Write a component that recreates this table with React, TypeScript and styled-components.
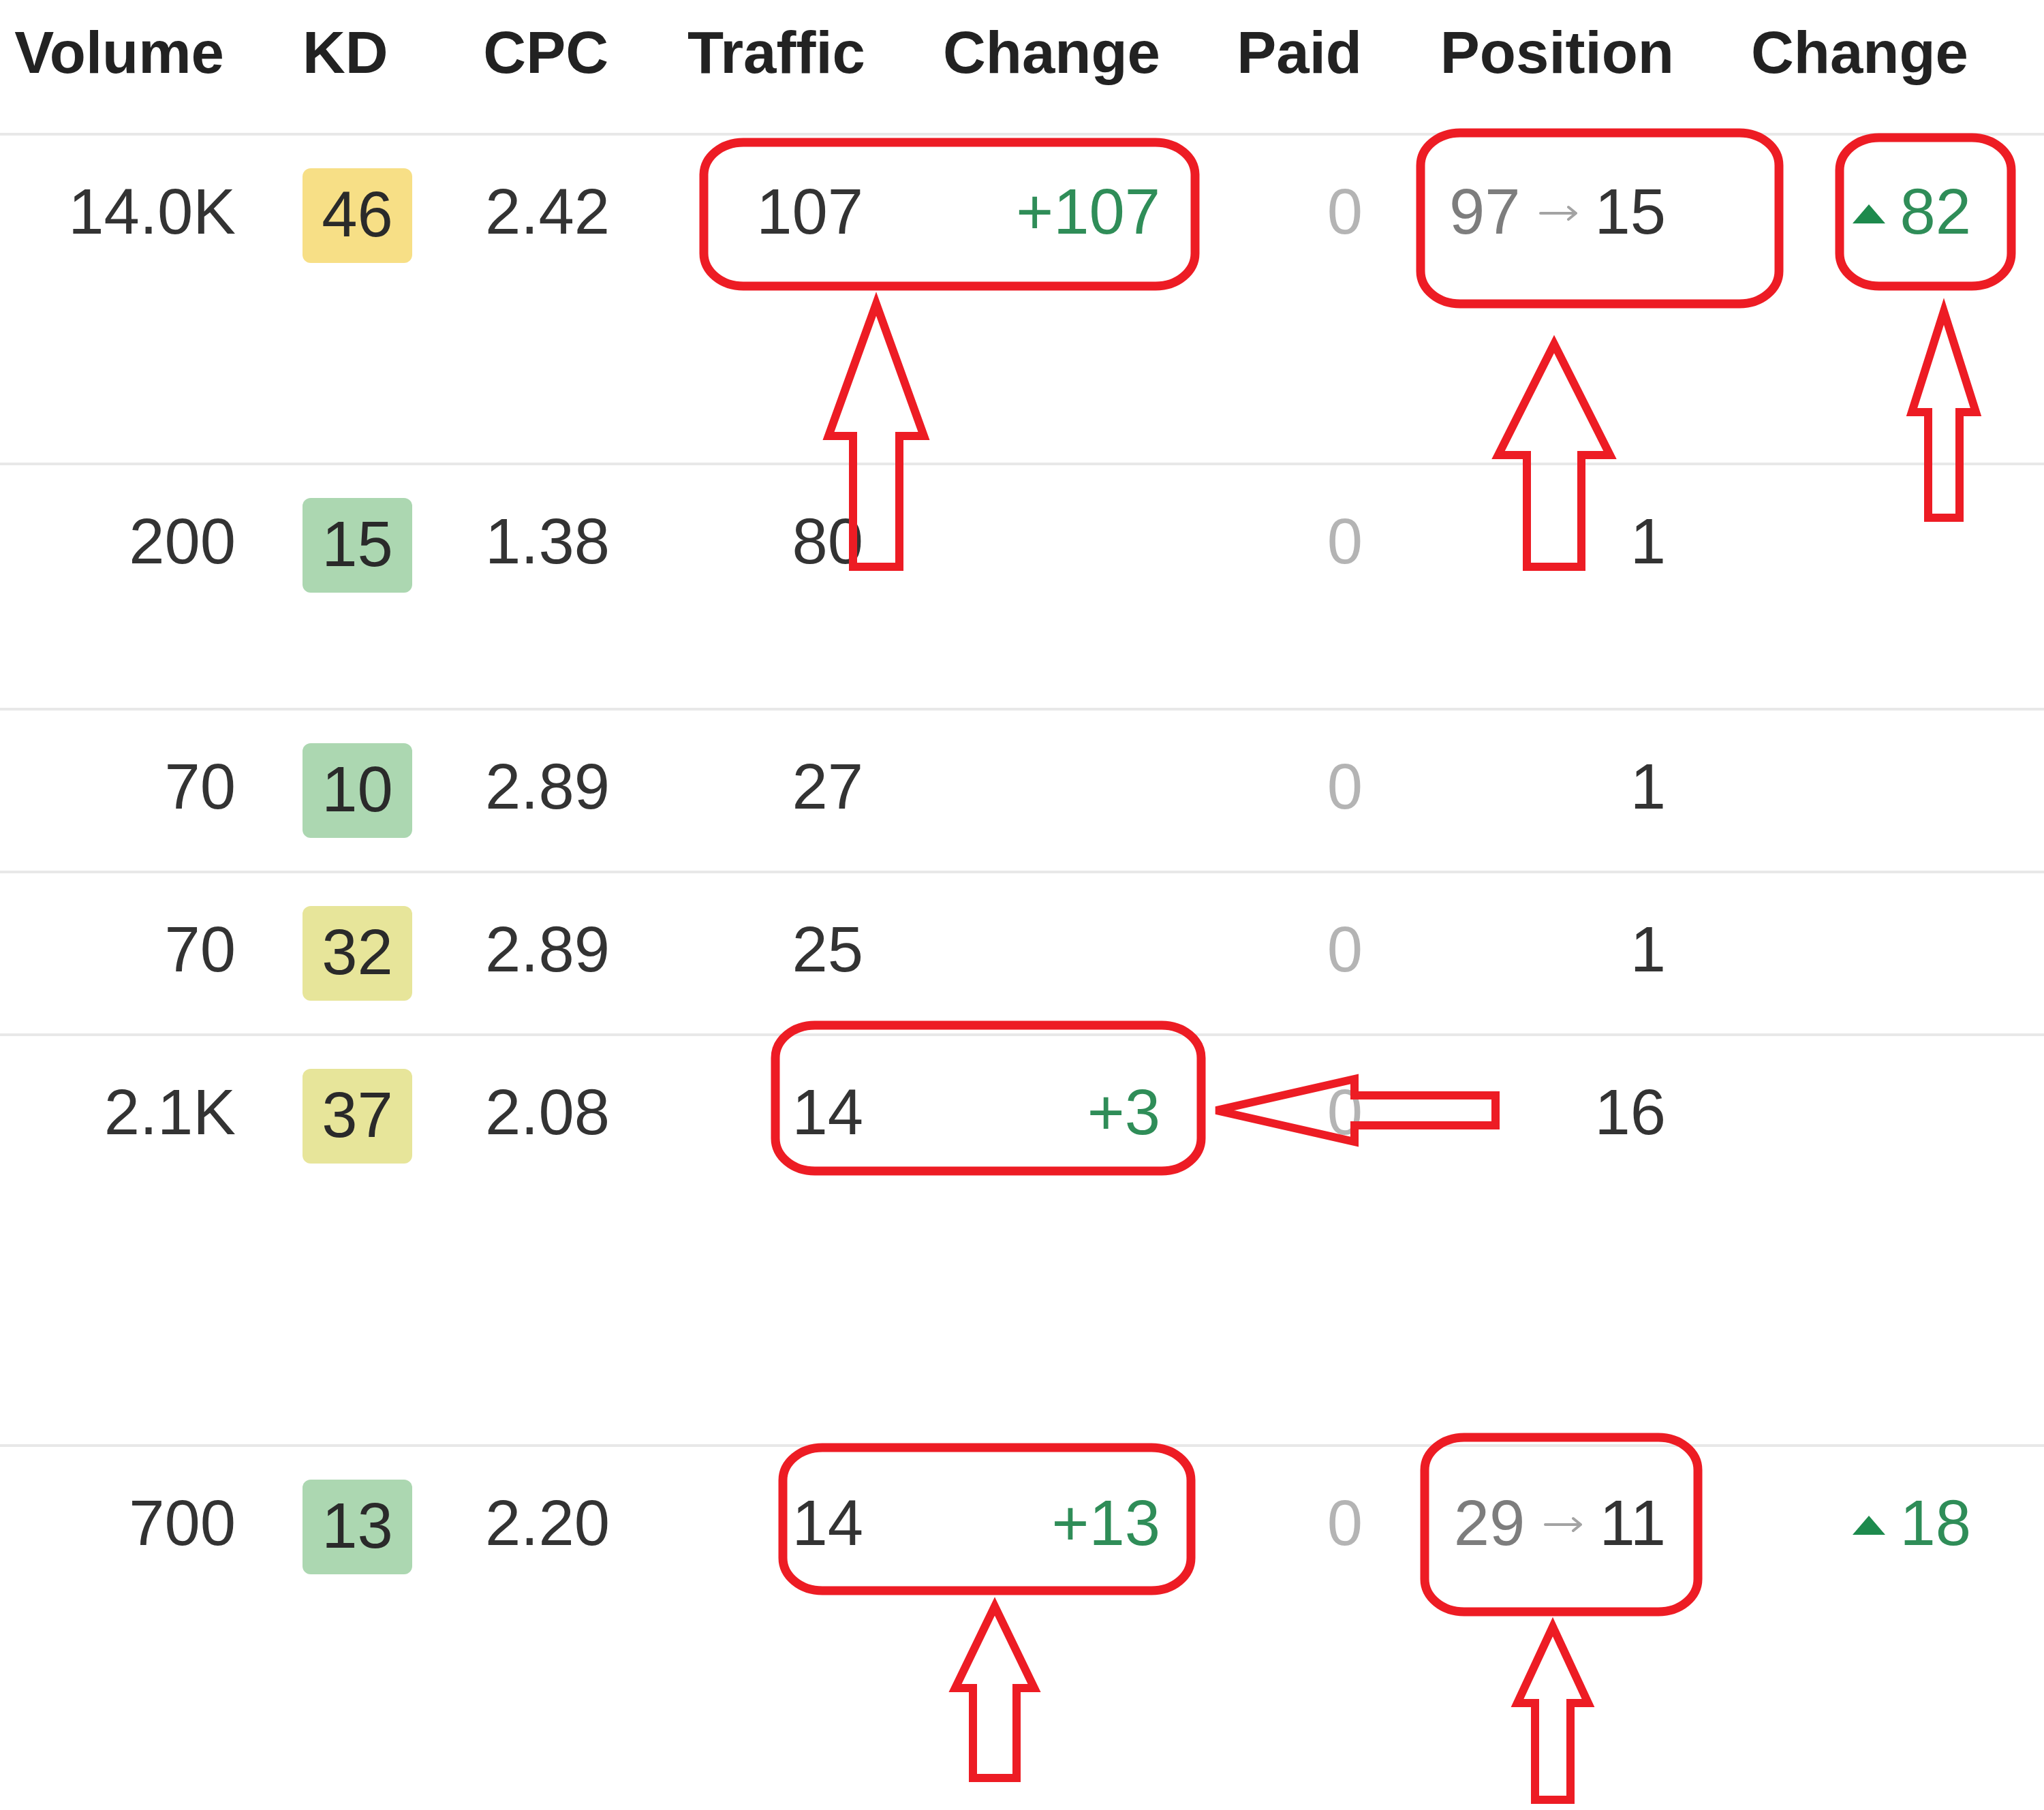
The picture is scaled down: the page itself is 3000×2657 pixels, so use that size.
import React from 'react';
import styled, { createGlobalStyle } from 'styled-components';

type Tone = 'yellow' | 'lime' | 'green';

interface RowData {
  height: number;
  volume: string;
  kd: number;
  kdTone: Tone;
  cpc: string;
  traffic: string;
  change?: string;
  paid: string;
  posFrom?: string;
  pos: string;
  posChange?: string;
}

const rows: RowData[] = [
  { height: 484, volume: '14.0K', kd: 46, kdTone: 'yellow', cpc: '2.42', traffic: '107', change: '+107', paid: '0', posFrom: '97', pos: '15', posChange: '82' },
  { height: 360, volume: '200', kd: 15, kdTone: 'green', cpc: '1.38', traffic: '80', paid: '0', pos: '1' },
  { height: 239, volume: '70', kd: 10, kdTone: 'green', cpc: '2.89', traffic: '27', paid: '0', pos: '1' },
  { height: 239, volume: '70', kd: 32, kdTone: 'lime', cpc: '2.89', traffic: '25', paid: '0', pos: '1' },
  { height: 603, volume: '2.1K', kd: 37, kdTone: 'lime', cpc: '2.08', traffic: '14', change: '+3', paid: '0', pos: '16' },
  { height: 537, volume: '700', kd: 13, kdTone: 'green', cpc: '2.20', traffic: '14', change: '+13', paid: '0', posFrom: '29', pos: '11', posChange: '18' },
];

const GlobalStyle = createGlobalStyle`
  html, body {
    margin: 0;
    padding: 0;
    background: #fff;
  }
  body {
    font-family: "Liberation Sans", Arial, sans-serif;
  }
`;

const COLS = '400px 280px 260px 370px 440px 300px 450px 500px';

const Page = styled.div`
  position: relative;
  width: 3000px;
  height: 2657px;
  overflow: hidden;
  background: #fff;
`;

const HeadRow = styled.div`
  display: grid;
  grid-template-columns: ${COLS};
  height: 195px;
  padding-top: 27px;
  box-sizing: border-box;
`;

const HeadCell = styled.div<{ $pr?: number; $pl?: number; $left?: boolean }>`
  display: flex;
  justify-content: ${(p) => (p.$left ? 'flex-start' : 'flex-end')};
  padding: 0 ${(p) => p.$pr ?? 0}px 0 ${(p) => p.$pl ?? 0}px;
  font-size: 87px;
  font-weight: 700;
  line-height: 100px;
  color: #222;
  white-space: nowrap;
`;

const Row = styled.div<{ $h: number }>`
  display: grid;
  grid-template-columns: ${COLS};
  align-items: start;
  height: ${(p) => p.$h}px;
  box-sizing: border-box;
  border-top: 4px solid #e8e8e8;
  padding-top: 42px;
`;

const Cell = styled.div<{ $pr?: number; $pl?: number; $left?: boolean; $tone?: 'muted' | 'up' }>`
  display: flex;
  align-items: center;
  justify-content: ${(p) => (p.$left ? 'flex-start' : 'flex-end')};
  height: 139px;
  padding: 0 ${(p) => p.$pr ?? 0}px 0 ${(p) => p.$pl ?? 0}px;
  font-size: 94px;
  line-height: 1;
  white-space: nowrap;
  color: ${(p) => (p.$tone === 'muted' ? '#b4b4b4' : p.$tone === 'up' ? '#2f8d58' : '#333')};
`;

const badgeBg: Record<Tone, string> = {
  yellow: '#f7df86',
  lime: '#e7e59a',
  green: '#acd7b1',
};

const Badge = styled.span<{ $tone: Tone }>`
  display: flex;
  align-items: center;
  justify-content: center;
  width: 161px;
  height: 139px;
  margin-top: 12px;
  padding-bottom: 4px;
  box-sizing: border-box;
  border-radius: 12px;
  background: ${(p) => badgeBg[p.$tone]};
  color: #2a2a2a;
`;

const Prev = styled.span`
  color: #7d7d7d;
`;

const ArrowMark = styled.svg`
  flex: none;
  margin: 4px 24px 0 28px;
`;

const Up = styled.span`
  display: inline-flex;
  align-items: center;
  gap: 21px;
  color: #2f8d58;

  svg {
    margin-top: 6px;
  }
`;

const Overlay = styled.svg`
  position: absolute;
  left: 0;
  top: 0;
  pointer-events: none;
`;

const RED = '#ed1c24';

function upArrow(tx: number, ty: number, hb: number, hw: number, sw: number, by: number) {
  return [
    [tx, ty], [tx + hw, hb], [tx + sw, hb], [tx + sw, by],
    [tx - sw, by], [tx - sw, hb], [tx - hw, hb],
  ].map((p) => p.join(',')).join(' ');
}

function leftArrow(tx: number, ty: number, hb: number, hh: number, sh: number, rx: number) {
  return [
    [tx, ty], [hb, ty - hh], [hb, ty - sh], [rx, ty - sh],
    [rx, ty + sh], [hb, ty + sh], [hb, ty + hh],
  ].map((p) => p.join(',')).join(' ');
}

const marks = [
  { x: 1033, y: 209, w: 721, h: 211 },
  { x: 2085, y: 195, w: 526, h: 251 },
  { x: 2700, y: 202, w: 252, h: 218 },
  { x: 1138, y: 1505, w: 625, h: 214 },
  { x: 1149, y: 2125, w: 599, h: 210 },
  { x: 2091, y: 2110, w: 401, h: 256 },
];

const arrows = [
  upArrow(1286, 446, 640, 70, 34, 832),
  upArrow(2281, 505, 668, 82, 40, 832),
  upArrow(2853, 457, 605, 47, 23, 760),
  leftArrow(1785, 1630, 1988, 46, 22, 2195),
  upArrow(1460, 2358, 2478, 58, 32, 2610),
  upArrow(2279, 2388, 2500, 52, 26, 2642),
];

function Annotations() {
  return (
    <Overlay width={3000} height={2657} viewBox="0 0 3000 2657">
      {marks.map((m, i) => (
        <rect key={i} x={m.x} y={m.y} width={m.w} height={m.h} rx={58} ry={48}
          fill="none" stroke={RED} strokeWidth={13} />
      ))}
      {arrows.map((pts, i) => (
        <polygon key={i} points={pts} fill="none" stroke={RED} strokeWidth={12} strokeLinejoin="miter" />
      ))}
    </Overlay>
  );
}

function Triangle() {
  return (
    <svg width="48" height="28" viewBox="0 0 48 28">
      <polygon points="24,0 48,28 0,28" fill="#1d8a4d" />
    </svg>
  );
}

function ToArrow() {
  return (
    <ArrowMark width="57" height="24" viewBox="0 0 57 24">
      <path d="M2 12 H54 M43 3 L54 12 L43 21" fill="none" stroke="#a3a3a3" strokeWidth="4" strokeLinecap="round" strokeLinejoin="round" />
    </ArrowMark>
  );
}

export default function App() {
  return (
    <Page>
      <GlobalStyle />
      <HeadRow>
        <HeadCell $pr={71}>Volume</HeadCell>
        <HeadCell $left $pl={44}>KD</HeadCell>
        <HeadCell $pr={47}>CPC</HeadCell>
        <HeadCell $pr={40}>Traffic</HeadCell>
        <HeadCell $pr={47}>Change</HeadCell>
        <HeadCell $pr={51}>Paid</HeadCell>
        <HeadCell $pr={43}>Position</HeadCell>
        <HeadCell $pr={111}>Change</HeadCell>
      </HeadRow>

      {rows.map((r, i) => (
        <Row key={i} $h={r.height}>
          <Cell $pr={54}>{r.volume}</Cell>
          <Cell $left $pl={44}>
            <Badge $tone={r.kdTone}>{r.kd}</Badge>
          </Cell>
          <Cell $pr={45}>{r.cpc}</Cell>
          <Cell $pr={43}>{r.traffic}</Cell>
          <Cell $pr={47} $tone="up">{r.change}</Cell>
          <Cell $pr={50} $tone="muted">{r.paid}</Cell>
          <Cell $pr={55}>
            {r.posFrom && (
              <>
                <Prev>{r.posFrom}</Prev>
                <ToArrow />
              </>
            )}
            {r.pos}
          </Cell>
          <Cell $pr={107}>
            {r.posChange && (
              <Up>
                <Triangle />
                {r.posChange}
              </Up>
            )}
          </Cell>
        </Row>
      ))}

      <Annotations />
    </Page>
  );
}
